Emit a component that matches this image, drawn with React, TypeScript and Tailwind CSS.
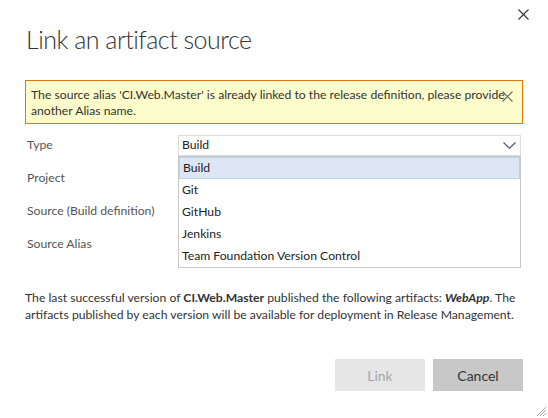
const options = ['Build', 'Git', 'GitHub', 'Jenkins', 'Team Foundation Version Control']

const labels = ['Type', 'Project', 'Source (Build definition)', 'Source Alias']

function Cross({ className, color }: { className: string; color: string }) {
    return (
        <svg className={className} width="11" height="11" viewBox="0 0 11 11">
            <path d="M0.5 0.5 L10.5 10.5 M10.5 0.5 L0.5 10.5" stroke={color} strokeWidth="1.1" fill="none" />
        </svg>
    )
}

export default function App() {
    return (
        <div className="relative w-[548px] h-[418px] bg-white text-[#333] font-['Lato',sans-serif] overflow-hidden">
            {/* Close */}
            <button className="absolute top-[9px] left-[518px]" aria-label="Close">
                <Cross className="block" color="#333" />
            </button>

            <div className="pl-[25px] pr-[25px] pt-[22px]">
                <h1 className="text-[25px] font-light leading-[34px] tracking-[-0.5px] pl-[1px] whitespace-nowrap">Link an artifact source</h1>

                {/* Warning */}
                <div className="mt-[24px] w-[498px] border border-[#e0780a] bg-[#fdfdcc] pl-[5px] pr-[20px] pt-[6px] pb-[4px] relative">
                    <p className="text-[12.2px] leading-[16px] text-[#333] whitespace-nowrap">
                        The source alias 'CI.Web.Master' is already linked to the release definition, please provide
                        <br />
                        another Alias name.
                    </p>
                    <Cross className="absolute top-[10px] left-[476px]" color="#666" />
                </div>

                {/* Form */}
                <div className="relative mt-[11px]">
                    {labels.map((label, i) => (
                        <div key={label} className="flex h-[33px]">
                            <div className="w-[153px] pl-[2px] text-[12.2px] leading-[20px] text-[#555]">{label}</div>
                            {i === 0 && (
                                <div className="relative w-[343px] h-[21px] border border-[#dcdcdc] flex items-center pl-[3px]">
                                    <span className="text-[12.2px] text-[#222]">Build</span>
                                    <svg className="absolute right-[4px] top-[6px]" width="13" height="7" viewBox="0 0 13 7">
                                        <path d="M0.5 0.5 L6.5 6.2 L12.5 0.5" stroke="#4a5a70" strokeWidth="1.2" fill="none" />
                                    </svg>
                                </div>
                            )}
                        </div>
                    ))}

                    {/* Dropdown list */}
                    <div className="absolute left-[153px] top-[21px] w-[343px] border border-[#c8c8c8] bg-white">
                        {options.map((opt, i) => (
                            <div
                                key={opt}
                                className={`h-[22px] flex items-center pl-[3px] text-[12.2px] text-[#222] ${i === 0 ? 'bg-[#dde6f4] border border-[#bcd0ea]' : ''}`}
                            >
                                {opt}
                            </div>
                        ))}
                    </div>
                </div>

                {/* Info */}
                <p className="mt-[22px] text-[12.2px] leading-[17px] text-[#333] whitespace-nowrap">
                    The last successful version of <b>CI.Web.Master</b> published the following artifacts: <b className="italic">WebApp</b>. The
                    <br />
                    artifacts published by each version will be available for deployment in Release Management.
                </p>

                {/* Buttons */}
                <div className="mt-[36px] flex justify-end gap-[8px] w-[498px]">
                    <button className="w-[90px] h-[32px] bg-[#e6e6e6] text-[#a6a6a6] text-[14px]">Link</button>
                    <button className="w-[90px] h-[32px] bg-[#c8c8c8] text-[#333] text-[14px]">Cancel</button>
                </div>
            </div>

            {/* Resize grip */}
            <svg className="absolute left-[536px] top-[406px]" width="11" height="11" viewBox="0 0 11 11">
                <line x1="1" y1="10" x2="10" y2="1" stroke="#999" strokeWidth="0.8" />
                <line x1="4" y1="10" x2="10" y2="4" stroke="#999" strokeWidth="0.8" />
                <line x1="7" y1="10" x2="10" y2="7" stroke="#999" strokeWidth="0.8" />
            </svg>
        </div>
    )
}
